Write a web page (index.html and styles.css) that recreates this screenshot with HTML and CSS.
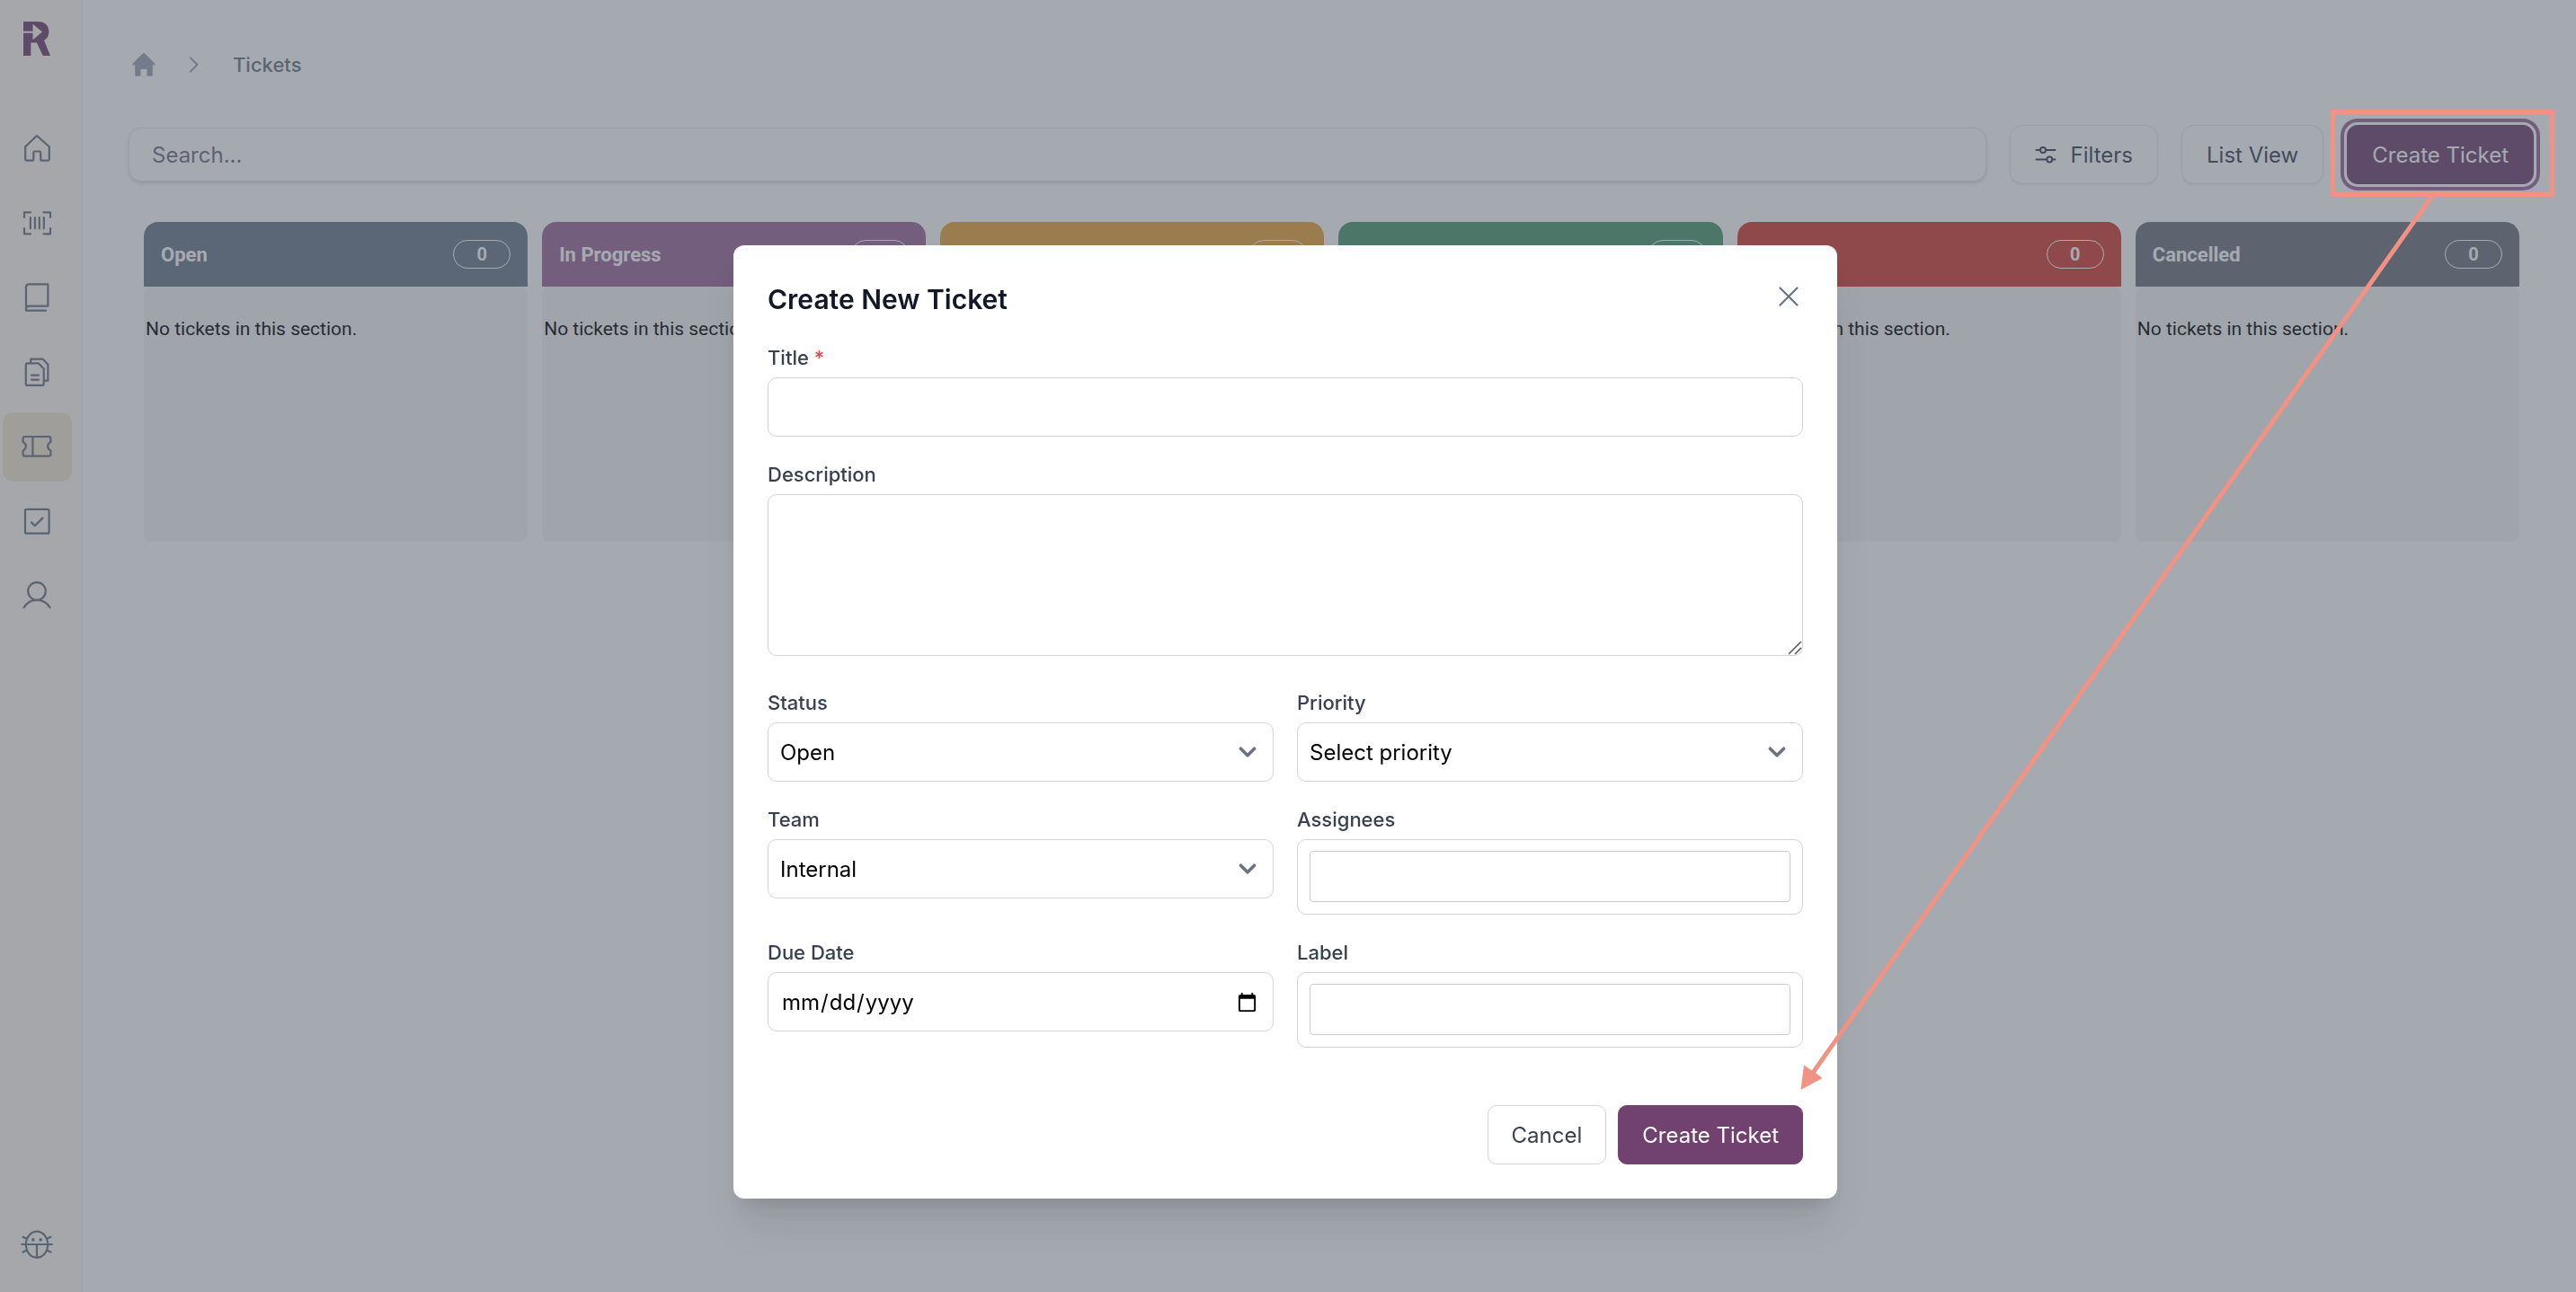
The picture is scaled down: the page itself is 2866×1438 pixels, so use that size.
FILE: index.html
```html
<!DOCTYPE html>
<html lang="en">
  <head>
    <meta charset="UTF-8" />
    <title>Tickets</title>
    <link rel="stylesheet" href="styles.css">
  </head>
  <body>
    <div class="layout">
      <nav class="sidebar" aria-label="Main">
        <a class="logo" href="#" aria-label="Dashboard">
          <svg width="31" height="38" viewBox="0 0 31 38">
            <path fill="#71416f" d="M0 0h15.500c8.500 0 12.900 4.500 12.900 11.300 0 4.500-1.900 8-5.400 9.700L30 38h-8.300L14.900 23.500H8.300V38H0z" />
            <path fill="#fff9f2" d="M0 10.700h10.500v-8L21 11.400 10.500 20.300v-7.500H0z" />
          </svg>
        </a>
        <ul class="sidebar-menu">
          <li>
            <a href="#" aria-label="Home">
              <svg class="icon" viewBox="0 0 37 37"><path d="M18 4 5.200 16.200V30q0 1.700 1.700 1.700h5.900q1.500 0 1.500-1.500V23q0-1.500 1.500-1.500h4.900q1.500 0 1.500 1.500v7.200q0 1.500 1.500 1.500h6.400q1.700 0 1.700-1.700V16.200z" /></svg>
            </a>
          </li>
          <li>
            <a href="#" aria-label="Assets">
              <svg class="icon" viewBox="0 0 37 37"><path d="M4 12V6.300h7M25.500 6.300H33V12M33 24v6.300h-7.500M11 30.300H4V24M10.900 12v12.500M15.900 12v12.500M20.800 12v12.500M25.800 12v12.500" /></svg>
            </a>
          </li>
          <li>
            <a href="#" aria-label="Library">
              <svg class="icon" viewBox="0 0 37 37"><path d="M6 31V6.500q0-3.200 3.200-3.200h21.200v24.300H9.200Q6 27.600 6 30.500v2.200h22" /></svg>
            </a>
          </li>
          <li>
            <a href="#" aria-label="Documents">
              <svg class="icon" viewBox="0 0 37 37"><path d="M7.500 8.300h12.200l6 6v16.900q0 1.700-1.700 1.700H7.500q-1.700 0-1.700-1.700V10q0-1.700 1.700-1.700zM11.200 8V3.700h13.500l5.700 6v18h-4M12 21.700h8M12 26.600h8" /></svg>
            </a>
          </li>
          <li class="active">
            <a href="#" aria-label="Tickets">
              <svg class="icon" viewBox="0 0 37 37"><path d="M4.500 7h27q1.900 0 1.900 1.900V13a5.200 5.200 0 0 0 0 9.600v4.100q0 1.900-1.900 1.900h-27q-1.900 0-1.900-1.900v-4.100a5.200 5.200 0 0 0 0-9.600V8.900Q2.600 7 4.500 7zM13.400 7v21.600" /></svg>
            </a>
          </li>
          <li>
            <a href="#" aria-label="Tasks">
              <svg class="icon" viewBox="0 0 37 37"><rect x="5" y="4.900" width="26.600" height="26.800" rx="1.500" /><path d="m12 19.400 3.800 3.800 8.600-8.600" /></svg>
            </a>
          </li>
          <li>
            <a href="#" aria-label="Profile">
              <svg class="icon" viewBox="0 0 37 37"><circle cx="18" cy="13" r="9.800" /><path d="M3.600 31.300C6.500 26 12 22.900 18 22.900s11.500 3.100 14.600 8.400" /></svg>
            </a>
          </li>
        </ul>
        <a class="sidebar-bottom" href="#" aria-label="Report a bug">
          <svg class="icon" viewBox="0 0 37 37"><ellipse cx="18" cy="18.200" rx="12.200" ry="14.500" /><path d="M1.200 18h33.600M18 18v14.500M6.500 11.600 2.500 9.800M29.500 11.600l4-1.800M6.500 24.800l-4 1.800M29.500 24.800l4 1.800" /><path d="M13.800 12.900v.1M22.200 12.900v.1" stroke-width="3.600" /></svg>
        </a>
      </nav>

      <main class="content">
        <nav class="breadcrumb" aria-label="Breadcrumb">
          <a href="#" aria-label="Home">
            <svg width="26" height="26" viewBox="0 0 26 26"><path fill="#9ca3af" d="M13 0q.7 0 1.200.5L25.600 12q.7.900-.6 1.300h-2.200v11.200q0 1.300-1.300 1.300h-4q-1 0-1-1v-5.500q0-1.300-1.300-1.300h-4.400q-1.300 0-1.300 1.300v5.500q0 1-1 1h-4q-1.300 0-1.300-1.300V13.300H1q-1.300-.4-.6-1.300L11.800.5Q12.300 0 13 0z" /></svg>
          </a>
          <svg width="10" height="18" viewBox="0 0 10 18"><path fill="none" stroke="#9ca3af" stroke-width="2" stroke-linecap="round" stroke-linejoin="round" d="m1 1.500 7.500 7.500L1 16.500" /></svg>
          <a href="#">Tickets</a>
        </nav>

        <div class="toolbar">
          <input class="search" type="text" placeholder="Search..." aria-label="Search">
          <button class="button" type="button">
            <svg width="24" height="20" viewBox="0 0 24 20"><path fill="none" stroke="#374151" stroke-width="2" stroke-linecap="round" d="M1.500 5h4M12 5h10.500M1.500 15.500H13M19.500 15.500h3" /><circle cx="9" cy="5" r="3" fill="none" stroke="#374151" stroke-width="2" /><circle cx="16.300" cy="15.500" r="3" fill="none" stroke="#374151" stroke-width="2" /></svg>
            Filters
          </button>
          <button class="button" type="button">List View</button>
          <button class="button primary focused" type="button">Create Ticket</button>
        </div>

        <div class="board">
          <section class="column">
            <div class="column-header open"><h2>Open</h2><span class="count">0</span></div>
            <div class="column-body">No tickets in this section.</div>
          </section>
          <section class="column">
            <div class="column-header in-progress"><h2>In Progress</h2><span class="count">0</span></div>
            <div class="column-body">No tickets in this section.</div>
          </section>
          <section class="column">
            <div class="column-header on-hold"><span class="count">0</span></div>
            <div class="column-body">No tickets in this section.</div>
          </section>
          <section class="column">
            <div class="column-header done"><span class="count">0</span></div>
            <div class="column-body">No tickets in this section.</div>
          </section>
          <section class="column">
            <div class="column-header blocked"><span class="count">0</span></div>
            <div class="column-body">No tickets in this section.</div>
          </section>
          <section class="column">
            <div class="column-header cancelled"><h2>Cancelled</h2><span class="count">0</span></div>
            <div class="column-body">No tickets in this section.</div>
          </section>
        </div>
      </main>
    </div>

    <div class="overlay">
      <form class="modal" role="dialog" aria-labelledby="modal-title">
        <div class="modal-header">
          <h1 id="modal-title">Create New Ticket</h1>
          <button class="close" type="button" aria-label="Close">
            <svg width="22" height="22" viewBox="0 0 22 22"><path fill="none" stroke="#6b7280" stroke-width="2.200" stroke-linecap="round" d="m1.500 1.500 19 19M20.500 1.500l-19 19" /></svg>
          </button>
        </div>
        <div class="field">
          <label for="title">Title <span class="required">*</span></label>
          <input class="control" id="title" type="text" required>
        </div>
        <div class="field description">
          <label for="description">Description</label>
          <textarea class="control" id="description"></textarea>
        </div>
        <div class="field-grid">
          <div class="field">
            <label for="status">Status</label>
            <select class="control" id="status">
              <option>Open</option>
            </select>
          </div>
          <div class="field">
            <label for="priority">Priority</label>
            <select class="control" id="priority">
              <option>Select priority</option>
            </select>
          </div>
          <div class="field">
            <label for="team">Team</label>
            <select class="control" id="team">
              <option>Internal</option>
            </select>
          </div>
          <div class="field">
            <label for="assignees">Assignees</label>
            <div class="tag-box"><input id="assignees" type="text"></div>
          </div>
          <div class="field">
            <label for="due-date">Due Date</label>
            <input class="control" id="due-date" type="date">
          </div>
          <div class="field">
            <label for="label">Label</label>
            <div class="tag-box"><input id="label" type="text"></div>
          </div>
        </div>
        <div class="modal-footer">
          <button class="button" type="button">Cancel</button>
          <button class="button primary" type="submit">Create Ticket</button>
        </div>
      </form>
    </div>

    <svg class="hint" viewBox="0 0 2866 1438" preserveAspectRatio="none" aria-hidden="true">
      <rect x="2595.500" y="124.500" width="244" height="92" fill="none" stroke="#f19284" stroke-width="5" />
      <path d="M2706 218 2017 1194" fill="none" stroke="#f19284" stroke-width="5" />
      <path d="m2003.500 1213 3.500-27.500 9.500 6.500 4 2.500 7 5.500z" fill="#f19284" />
    </svg>
  </body>
</html>
```
FILE: styles.css
```css
* {
  box-sizing: border-box;
}
body {
  font-family: Inter, "Liberation Sans", sans-serif;
  font-size: 24px;
  margin: 0;
  background-color: #fff;
  color: #374151;
}
.layout {
  display: flex;
  min-height: 100vh;
}
.sidebar {
  width: 92px;
  display: flex;
  flex-direction: column;
  padding: 24px 11px 14px 3px;
  background-color: #fff9f2;
  border-right: 1px solid #e5e7eb;
}
.logo {
  display: flex;
  justify-content: center;
  margin-bottom: 65px;
}
.sidebar-menu {
  display: flex;
  flex-direction: column;
  gap: 6px;
  list-style: none;
  margin: 0;
  padding: 0;
}
.sidebar-menu a,
.sidebar-bottom {
  display: flex;
  align-items: center;
  justify-content: center;
  height: 77px;
  border-radius: 12px;
}
.sidebar-menu .active a {
  background-color: #f3e7d0;
}
.sidebar-bottom {
  margin-top: auto;
}
.icon {
  width: 37px;
  height: 37px;
  fill: none;
  stroke: #6b7280;
  stroke-width: 2.2;
  stroke-linecap: round;
  stroke-linejoin: round;
}
.content {
  flex: 1;
  padding: 56px 47px 0 51px;
}
.breadcrumb {
  display: flex;
  align-items: center;
  gap: 38px;
  height: 32px;
  padding-left: 4px;
  margin-bottom: 51px;
  font-size: 22px;
  font-weight: 500;
}
.breadcrumb a {
  display: flex;
  color: #6b7280;
  text-decoration: none;
}
.toolbar {
  display: flex;
  align-items: center;
  gap: 26px;
  margin-bottom: 42px;
}
.search {
  flex: 1;
  height: 60px;
  padding: 0 25px;
  font: inherit;
  background-color: #fff;
  border: 1px solid #e5e7eb;
  border-radius: 14px;
  box-shadow: 0 2px 4px rgba(0, 0, 0, 0.15);
}
.search::placeholder {
  color: #6b7280;
}
.button {
  display: flex;
  align-items: center;
  gap: 16px;
  height: 66px;
  padding: 0 26px;
  font: inherit;
  color: #374151;
  background-color: #fff;
  border: 1px solid #d1d5db;
  border-radius: 10px;
  cursor: pointer;
}
.toolbar .button {
  padding: 0 27px;
  border-color: #e5e7eb;
  border-radius: 14px;
  box-shadow: 0 2px 3px rgba(0, 0, 0, 0.06);
}
.button.primary {
  color: #fff;
  background-color: #71416f;
  border-color: #71416f;
}
.toolbar .button.focused {
  border-color: #71416f;
  border-radius: 12px;
  box-shadow: 0 0 0 3px #fff, 0 0 0 7px #9b6797;
}
.board {
  display: grid;
  grid-template-columns: repeat(6, 1fr);
  gap: 16px;
  padding: 0 16px 0 17px;
  font-family: Roboto, sans-serif;
}
.column-header {
  display: flex;
  align-items: center;
  height: 72px;
  padding: 0 19px;
  color: #fff;
  border-radius: 16px 16px 0 0;
}
.column-header h2 {
  margin: 0;
  font-size: 22px;
  font-weight: 700;
}
.open {
  background-color: #6b778b;
}
.in-progress {
  background-color: #9b6797;
}
.on-hold {
  background-color: #eba339;
}
.done {
  background-color: #4b976d;
}
.blocked {
  background-color: #d33d33;
}
.cancelled {
  background-color: #6f727d;
}
.count {
  width: 64px;
  margin-left: auto;
  font-size: 20px;
  font-weight: 700;
  line-height: 30px;
  text-align: center;
  border: 1px solid #fff;
  border-radius: 16px;
}
.column-body {
  height: 284px;
  padding: 34px 2px;
  font-size: 21px;
  line-height: 26px;
  color: #000;
  background-color: #f5f4f5;
  border-radius: 8px;
}
.overlay {
  position: fixed;
  inset: 0;
  display: flex;
  align-items: flex-start;
  justify-content: center;
  padding: 273px 6px 0 0;
  overflow: auto;
  background-color: rgba(75, 85, 99, 0.5);
}
.modal {
  width: 100%;
  max-width: 1228px;
  padding: 38px;
  background-color: #fff;
  border-radius: 12px;
  box-shadow: 0 36px 46px -9px rgba(0, 0, 0, 0.1), 0 14px 18px -9px rgba(0, 0, 0, 0.1);
}
.modal-header {
  display: flex;
  justify-content: space-between;
  align-items: flex-start;
  height: 45px;
  margin-bottom: 29px;
}
.modal-header h1 {
  margin: 0;
  font-size: 30px;
  font-weight: 600;
  line-height: 45px;
  color: #111827;
}
.close {
  display: flex;
  padding: 8px 5px;
  background: none;
  border: none;
  cursor: pointer;
}
.field label {
  display: block;
  margin-bottom: 9px;
  font-size: 22px;
  font-weight: 500;
  line-height: 26px;
}
.required {
  color: #ef4444;
}
.control {
  display: block;
  width: 100%;
  height: 66px;
  padding: 0 14px;
  font: inherit;
  color: #000;
  background-color: #fff;
  border: 1px solid #d1d5db;
  border-radius: 10px;
}
.description {
  margin: 29px 0 39px;
}
textarea.control {
  height: 180px;
  padding: 14px;
  resize: vertical;
}
textarea.control::-webkit-resizer {
  background: url("data:image/svg+xml,%3Csvg xmlns='http://www.w3.org/2000/svg' width='16' height='16' fill='none' stroke='%23555'%3E%3Cpath d='M1 15 15 1M8 15l7-7' stroke-width='1.500'/%3E%3C/svg%3E") no-repeat right bottom;
}
select.control {
  padding: 0 13px;
  appearance: none;
  background-image: url("data:image/svg+xml,%3Csvg xmlns='http://www.w3.org/2000/svg' fill='none' viewBox='0 0 20 20'%3E%3Cpath stroke='%236b7280' stroke-linecap='round' stroke-linejoin='round' stroke-width='1.900' d='M6 8l4 4 4-4'/%3E%3C/svg%3E");
  background-repeat: no-repeat;
  background-position: right 9px center;
  background-size: 38px 38px;
}
input[type="date"]::-webkit-calendar-picker-indicator {
  width: 23px;
  height: 23px;
  padding: 0;
  margin-right: 3px;
  background: url("data:image/svg+xml,%3Csvg xmlns='http://www.w3.org/2000/svg' viewBox='0 0 24 24'%3E%3Cpath d='M20 3h-1V1h-2v2H7V1H5v2H4c-1.100 0-2 .9-2 2v16c0 1.100.9 2 2 2h16c1.100 0 2-.9 2-2V5c0-1.100-.9-2-2-2zm0 18H4V8h16v13z'/%3E%3C/svg%3E") no-repeat center;
}
.field-grid {
  display: grid;
  grid-template-columns: 1fr 1fr;
  gap: 29px 26px;
}
.tag-box {
  padding: 12px 13px 13px;
  border: 1px solid #d1d5db;
  border-radius: 10px;
}
.tag-box input {
  display: block;
  width: 100%;
  height: 57px;
  padding: 0 10px;
  font: inherit;
  border: 1px solid #ccc;
  border-radius: 4px;
}
.modal-footer {
  display: flex;
  justify-content: flex-end;
  gap: 13px;
  margin-top: 64px;
}
/* pointer from the toolbar button to the submit button */
.hint {
  position: fixed;
  inset: 0;
  width: 100%;
  height: 100%;
  pointer-events: none;
}
```
